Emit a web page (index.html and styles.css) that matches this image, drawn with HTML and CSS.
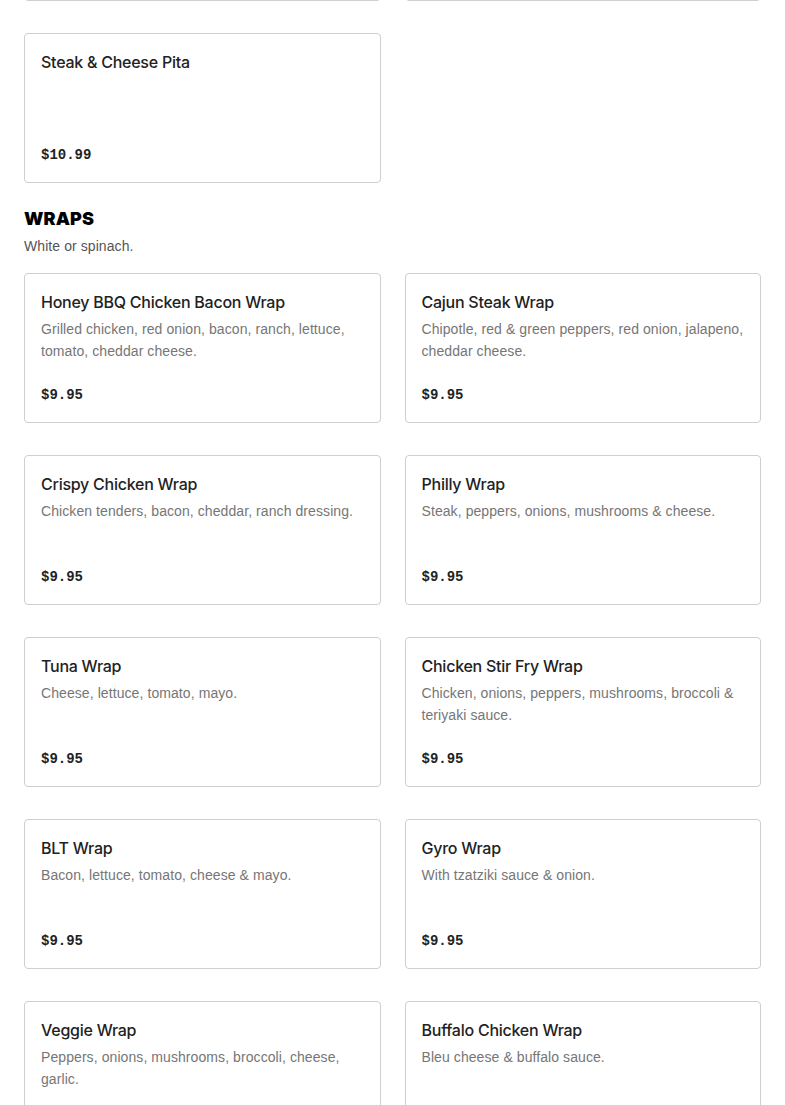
FILE: index.html
```html
<!DOCTYPE html>
<html>
<head>
<meta charset="utf-8">
<link rel="stylesheet" href="styles.css">
</head>
<body>
<div class="page">
  <div class="grid grid-prev">
    <div class="card"><div class="title">&nbsp;</div><div class="price">&nbsp;</div></div>
    <div class="card"><div class="title">&nbsp;</div><div class="price">&nbsp;</div></div>
  </div>
  <div class="grid">
    <div class="card">
      <div class="title">Steak &amp; Cheese Pita</div>
      <div class="price">$10.99</div>
    </div>
  </div>

  <section class="section">
    <h2 class="heading">WRAPS</h2>
    <p class="sub">White or spinach.</p>
    <div class="grid">
      <div class="card">
        <div class="title">Honey BBQ Chicken Bacon Wrap</div>
        <div class="desc">Grilled chicken, red onion, bacon, ranch, lettuce, tomato, cheddar cheese.</div>
        <div class="price">$9.95</div>
      </div>
      <div class="card">
        <div class="title">Cajun Steak Wrap</div>
        <div class="desc">Chipotle, red &amp; green peppers, red onion, jalapeno, cheddar cheese.</div>
        <div class="price">$9.95</div>
      </div>
      <div class="card">
        <div class="title">Crispy Chicken Wrap</div>
        <div class="desc">Chicken tenders, bacon, cheddar, ranch dressing.</div>
        <div class="price">$9.95</div>
      </div>
      <div class="card">
        <div class="title">Philly Wrap</div>
        <div class="desc">Steak, peppers, onions, mushrooms &amp; cheese.</div>
        <div class="price">$9.95</div>
      </div>
      <div class="card">
        <div class="title">Tuna Wrap</div>
        <div class="desc">Cheese, lettuce, tomato, mayo.</div>
        <div class="price">$9.95</div>
      </div>
      <div class="card">
        <div class="title">Chicken Stir Fry Wrap</div>
        <div class="desc">Chicken, onions, peppers, mushrooms, broccoli &amp; teriyaki sauce.</div>
        <div class="price">$9.95</div>
      </div>
      <div class="card">
        <div class="title">BLT Wrap</div>
        <div class="desc">Bacon, lettuce, tomato, cheese &amp; mayo.</div>
        <div class="price">$9.95</div>
      </div>
      <div class="card">
        <div class="title">Gyro Wrap</div>
        <div class="desc">With tzatziki sauce &amp; onion.</div>
        <div class="price">$9.95</div>
      </div>
      <div class="card">
        <div class="title">Veggie Wrap</div>
        <div class="desc">Peppers, onions, mushrooms, broccoli, cheese, garlic.</div>
        <div class="price">$9.95</div>
      </div>
      <div class="card">
        <div class="title">Buffalo Chicken Wrap</div>
        <div class="desc">Bleu cheese &amp; buffalo sauce.</div>
        <div class="price">$9.95</div>
      </div>
    </div>
  </section>
</div>
</body>
</html>
```

FILE: styles.css
```css
* { box-sizing: border-box; }
html, body { margin: 0; padding: 0; background: #fff; }
body {
  font-family: Inter, "Liberation Sans", sans-serif;
  color: #222;
  overflow: hidden;
}
.page {
  padding: 0 24px;
}
.grid {
  display: grid;
  grid-template-columns: 1fr 1fr;
  column-gap: 24px;
  row-gap: 32px;
}
.grid-prev {
  margin-top: -149px;
  margin-bottom: 32px;
}
.card {
  border: 1px solid #cfcfcf;
  border-radius: 4px;
  padding: 16px;
  height: 150px;
  display: flex;
  flex-direction: column;
}
.title {
  font-size: 16px;
  font-weight: 500;
  line-height: 24px;
  color: #222;
  letter-spacing: -0.25px;
}
.desc {
  margin-top: 4px;
  font-family: "Liberation Sans", Arial, sans-serif;
  font-size: 14px;
  line-height: 22px;
  color: #767676;
  letter-spacing: 0.08px;
}
.price {
  margin-top: auto;
  margin-bottom: 1px;
  font-family: "Liberation Mono", monospace;
  font-size: 14px;
  font-weight: 700;
  line-height: 20px;
  color: #222;
}
.section {
  margin-top: 24px;
}
.heading {
  margin: 0;
  font-size: 18px;
  font-weight: 900;
  line-height: 24px;
  color: #000;
  letter-spacing: 0.1px;
}
.sub {
  margin: 4px 0 16px;
  font-family: "Liberation Sans", Arial, sans-serif;
  font-size: 14px;
  line-height: 22px;
  color: #555;
  letter-spacing: 0.08px;
}
```
